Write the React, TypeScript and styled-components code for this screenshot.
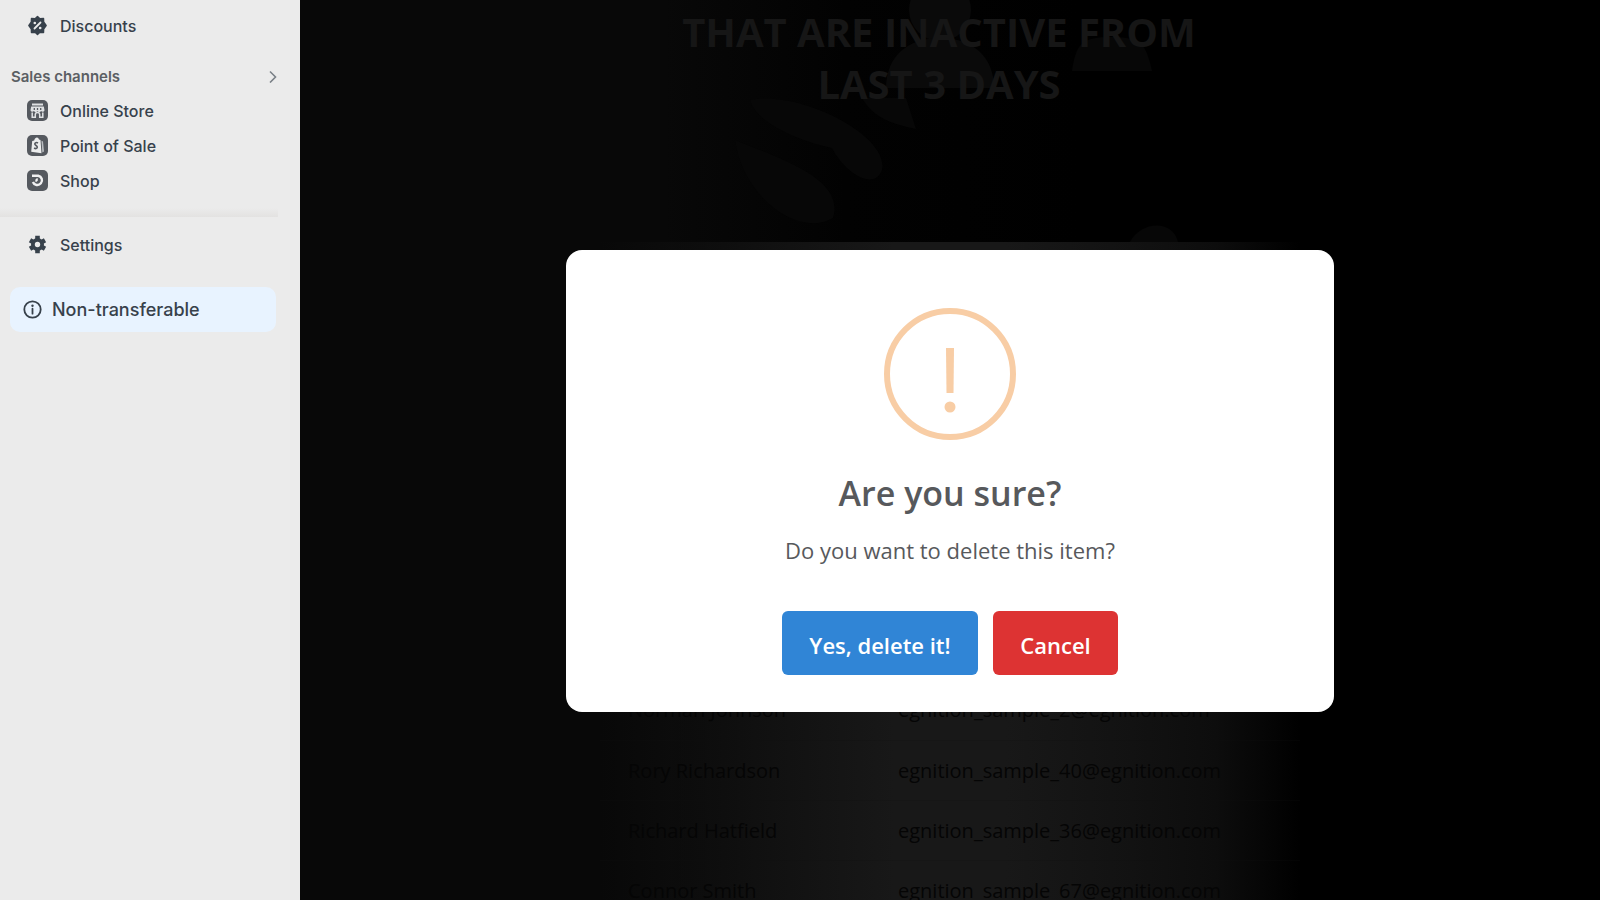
import React from "react";
import styled, { createGlobalStyle } from "styled-components";

const Global = createGlobalStyle`
  * { box-sizing: border-box; }
  body { margin: 0; background: #000; overflow: hidden; font-family: Inter, "Liberation Sans", sans-serif; }
  h1, h2, p, ul { margin: 0; padding: 0; }
`;

const Page = styled.div`
  display: grid;
  grid-template-columns: 300px 1fr;
  height: 100vh;
  overflow: hidden;
`;

const Sidebar = styled.aside`
  display: flex;
  flex-direction: column;
  padding-top: 8px;
  background: #ebebeb;
  color: #37414b;
`;

const NavList = styled.ul`
  list-style: none;
`;

const NavLink = styled.a`
  display: flex;
  align-items: center;
  gap: 12px;
  height: 35px;
  padding-left: 27px;
  color: inherit;
  font-size: 16px;
  font-weight: 500;
  text-decoration: none;
  svg { width: 21px; height: 21px; flex: none; }
`;

const SectionButton = styled.button`
  display: flex;
  align-items: center;
  justify-content: space-between;
  height: 30px;
  margin: 18px 0 2px;
  padding: 0 22px 0 11px;
  border: 0;
  background: none;
  color: #5b5f64;
  font: 600 15px Inter, sans-serif;
`;

const Divider = styled.hr`
  width: 278px;
  height: 9px;
  margin: 10px 0;
  border: 0;
  background: linear-gradient(#ebebeb, #e3e2e1);
`;

const Notice = styled.div`
  display: flex;
  align-items: center;
  gap: 10px;
  height: 45px;
  margin: 25px 24px 0 10px;
  padding-left: 13px;
  border-radius: 10px;
  background: #e8f3ff;
  font-size: 18px;
  font-weight: 500;
  svg { width: 19px; height: 19px; flex: none; }
`;

const Main = styled.main`
  position: relative;
  overflow: hidden;
  background: linear-gradient(90deg, #080808 0, #080808 28%, #020202 42%, #000 60%);
  font-family: "Open Sans", "Noto Sans", sans-serif;
`;

const Backdrop = styled.svg`
  position: absolute;
  top: 0;
  left: 50%;
  margin-left: -300px;
  width: 600px;
  height: 250px;
`;

const Headline = styled.h1`
  position: relative;
  padding-top: 6px;
  height: 242px;
  text-align: center;
  font-size: 40px;
  line-height: 52px;
  font-weight: 700;
  color: #161616;
  margin-right: 22px;
`;

const TableCard = styled.div`
  width: 700px;
  margin: 0 auto;
  padding-top: 438px;
  background: linear-gradient(90deg, transparent 0, #101010 22%, #181818 42%, #181818 58%, #121212 76%, #0d0d0d 88%, transparent 100%);
`;

const Table = styled.table`
  width: 100%;
  table-layout: fixed;
  border-collapse: collapse;
  font-size: 20px;
  color: #050505;
  td { height: 60px; padding: 0 0 0 28px; white-space: nowrap; border-bottom: 1px solid #0e0e0e40; }
  td:first-child { width: 270px; }
`;

const Overlay = styled.div`
  position: absolute;
  inset: 62px 0 0;
  display: flex;
  align-items: center;
  justify-content: center;
`;

const Dialog = styled.section`
  display: flex;
  flex-direction: column;
  align-items: center;
  width: 768px;
  max-width: 100%;
  padding: 58px 24px 37px;
  border-radius: 16px;
  background: #fff;
  color: #57595c;
`;

const WarningIcon = styled.svg`
  width: 132px;
  height: 132px;
`;

const Title = styled.h2`
  margin-top: 26px;
  font-size: 34px;
  line-height: 54px;
  font-weight: 600;
`;

const Message = styled.p`
  margin-top: 13px;
  font-size: 22px;
  line-height: 34px;
`;

const Actions = styled.div`
  display: flex;
  gap: 15px;
  margin-top: 44px;
`;

const ActionButton = styled.button<{ $color: string; $width: number }>`
  width: ${(p) => p.$width}px;
  height: 64px;
  padding: 4px 0 0;
  border: 0;
  border-radius: 6px;
  background: ${(p) => p.$color};
  color: #fff;
  font: 600 22px "Open Sans", "Noto Sans", sans-serif;
`;

const DiscountIcon = () => (
  <svg viewBox="0 0 21 21" fill="currentColor">
    <path d="M10.5 1.500l2.400 2.200 3.600-.2.100 3.500 2.500 3.500-2.500 3.500-.1 3.500-3.600-.2-2.400 2.200-2.400-2.200-3.600.2-.1-3.500-2.500-3.500 2.500-3.500.1-3.500 3.600.2z" stroke="currentColor" strokeWidth="1.500" strokeLinejoin="round" />
    <path d="M7.500 13.500l6-6" stroke="#ebebeb" strokeWidth="1.800" strokeLinecap="round" />
    <circle cx="7.800" cy="8" r="1.300" fill="#ebebeb" />
    <circle cx="13.200" cy="13" r="1.300" fill="#ebebeb" />
  </svg>
);

const StoreIcon = () => (
  <svg viewBox="0 0 21 21">
    <rect width="21" height="21" rx="5" fill="#55595f" />
    <path d="M5 3.500h11v2H5z" fill="#dfe1e3" />
    <path d="M4.200 6.500h12.600l.7 3.700a1.900 1.900 0 0 1-3.400.9 2 2 0 0 1-3.600 0 2 2 0 0 1-3.600 0 1.900 1.900 0 0 1-3.400-.9z" fill="#dfe1e3" />
    <path d="M5.200 12.500v4.800h3.100v-2.700a2.200 2.200 0 0 1 4.400 0v2.700h3.100v-4.800" fill="none" stroke="#dfe1e3" strokeWidth="1.500" />
    <path d="M7.300 8v2M10.500 8v2M13.700 8v2" stroke="#55595f" strokeWidth="1.300" />
  </svg>
);

const PosIcon = () => (
  <svg viewBox="0 0 21 21">
    <rect width="21" height="21" rx="5" fill="#55595f" />
    <path d="M5.200 6l2-.6C7.800 3.500 9 2.500 10 2.600c1 0 1.600.9 2 1.900l1.500.4 1 13.300-10.300-1.500z" fill="#eceded" />
    <path d="M14.500 5.800l1.500.8 1 9.900-1.700 1z" fill="#b9bcc0" />
    <path d="M11 8c-1.500-.9-3.200-.3-3.200 1 0 1.500 2.700 1.500 2.500 3.300-.1 1.500-1.800 1.700-3.200.7" fill="none" stroke="#55595f" strokeWidth="1.600" />
  </svg>
);

const ShopIcon = () => (
  <svg viewBox="0 0 21 21">
    <rect width="21" height="21" rx="5" fill="#55595f" />
    <path d="M5 5.700h6.200a4.700 4.700 0 1 1-5.300 6.300M10.800 9.400c-1.200 0-1.800 1.200-1 2.200" fill="none" stroke="#f0f0f1" strokeWidth="2.400" />
  </svg>
);

const GearIcon = () => (
  <svg viewBox="0 0 21 21">
    <g stroke="currentColor" strokeWidth="4.600" strokeLinejoin="round">
      <path d="M10.500 1.800v17.400M3 6.200l15 8.600M3 14.800l15-8.600" />
    </g>
    <circle cx="10.500" cy="10.500" r="6.500" fill="currentColor" />
    <circle cx="10.500" cy="10.500" r="2.700" fill="#ebebeb" />
  </svg>
);

const InfoIcon = () => (
  <svg viewBox="0 0 19 19" fill="none" stroke="currentColor" strokeWidth="1.800">
    <circle cx="9.500" cy="9.500" r="8.200" />
    <path d="M9.500 8.700v5" strokeLinecap="round" />
    <circle cx="9.500" cy="5.700" r="1.200" fill="currentColor" stroke="none" />
  </svg>
);

const channels = [
  { label: "Online Store", Icon: StoreIcon },
  { label: "Point of Sale", Icon: PosIcon },
  { label: "Shop", Icon: ShopIcon },
];

const customers = [
  ["Norman Johnson", "egnition_sample_2@egnition.com"],
  ["Rory Richardson", "egnition_sample_40@egnition.com"],
  ["Richard Hatfield", "egnition_sample_36@egnition.com"],
  ["Connor Smith", "egnition_sample_67@egnition.com"],
];

export default function App() {
  return (
    <Page>
      <Global />
      <Sidebar>
        <NavLink href="#discounts"><DiscountIcon />Discounts</NavLink>
        <SectionButton type="button">
          Sales channels
          <svg width="10" height="14" viewBox="0 0 10 14" fill="none" stroke="#7a8087" strokeWidth="1.600">
            <path d="M2 2.500l5.500 5.500L2 13.500" />
          </svg>
        </SectionButton>
        <NavList>
          {channels.map(({ label, Icon }) => (
            <li key={label}><NavLink href="#channel"><Icon />{label}</NavLink></li>
          ))}
        </NavList>
        <Divider />
        <NavLink href="#settings"><GearIcon />Settings</NavLink>
        <Notice><InfoIcon />Non-transferable</Notice>
      </Sidebar>
      <Main>
        <Backdrop viewBox="650 0 600 250" aria-hidden="true">
          <g fill="#0a0a0a">
            <circle cx="940" cy="10" r="31" />
            <path d="M886 88c0-30 20-50 54-50s54 20 54 50z" />
          </g>
          <g fill="#070707">
            <path d="M1072 71c4-28 10-34 40-34s34 8 40 34z" />
            <path d="M862 98c10 18 28 26 54 31l-10-31z" />
            <path d="M750 100c50-10 140 36 132 70-8 22-38 2-50-22-30-6-76-24-82-48zM735 140c50 20 110 40 98 78-34 20-90-20-98-78z" />
            <path d="M1130 242c10-20 42-24 48 0z" />
          </g>
        </Backdrop>
        <Headline>THAT ARE INACTIVE FROM<br />LAST 3 DAYS</Headline>
        <TableCard>
          <Table>
            <tbody>
              {customers.map(([name, email]) => (
                <tr key={email}><td>{name}</td><td>{email}</td></tr>
              ))}
            </tbody>
          </Table>
        </TableCard>
        <Overlay>
          <Dialog role="dialog" aria-labelledby="dialog-title" aria-describedby="dialog-message">
            <WarningIcon viewBox="0 0 132 132" fill="#f8cda5">
              <circle cx="66" cy="66" r="63" fill="none" stroke="#f8cda5" strokeWidth="6" />
              <path d="M62 40h8l-.5 45h-7z" />
              <circle cx="66" cy="99" r="5.500" />
            </WarningIcon>
            <Title id="dialog-title">Are you sure?</Title>
            <Message id="dialog-message">Do you want to delete this item?</Message>
            <Actions>
              <ActionButton type="button" $color="#3085d6" $width={196}>Yes, delete it!</ActionButton>
              <ActionButton type="button" $color="#dd3333" $width={125}>Cancel</ActionButton>
            </Actions>
          </Dialog>
        </Overlay>
      </Main>
    </Page>
  );
}
